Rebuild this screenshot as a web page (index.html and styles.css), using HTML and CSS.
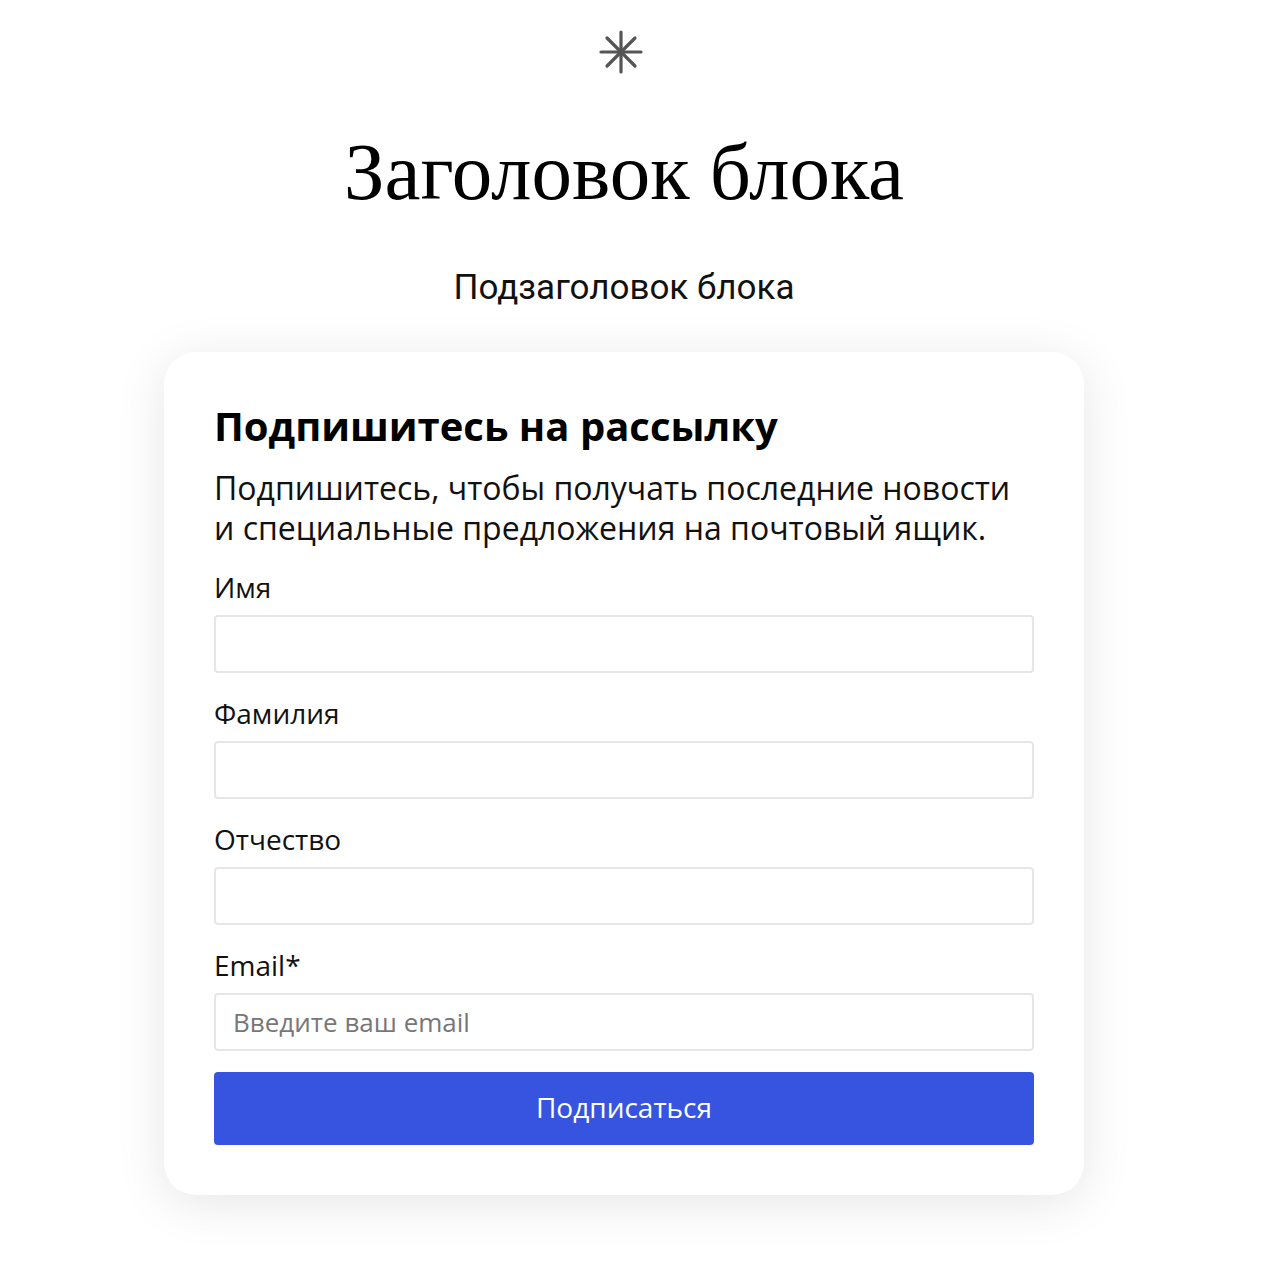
FILE: index.html
```html
<!DOCTYPE html>
<html lang="ru">
<head>
<meta charset="UTF-8" />
<meta name="viewport" content="width=device-width, initial-scale=1" />
<title>Заголовок блока</title>
<link rel="stylesheet" href="styles.css">
</head>
<body>

<section class="block">
  <svg class="block-icon" width="44" height="44" viewBox="0 0 44 44" aria-hidden="true">
    <g stroke="#555" stroke-width="3.2" stroke-linecap="round">
      <line x1="22" y1="2" x2="22" y2="42" />
      <line x1="2" y1="22" x2="42" y2="22" />
      <line x1="8" y1="8" x2="36" y2="36" />
      <line x1="36" y1="8" x2="8" y2="36" />
    </g>
  </svg>

  <h1 class="block-title">Заголовок блока</h1>
  <p class="block-subtitle">Подзаголовок блока</p>

  <form class="subscribe-form" id="subscribeForm" novalidate>
    <h2>Подпишитесь на рассылку</h2>
    <p class="subscribe-text">Подпишитесь, чтобы получать последние новости и специальные предложения на почтовый ящик.</p>

    <label for="name">Имя</label>
    <input type="text" id="name" name="name" />

    <label for="surname">Фамилия</label>
    <input type="text" id="surname" name="surname" />

    <label for="patronymic">Отчество</label>
    <input type="text" id="patronymic" name="patronymic" />

    <label for="email">Email*</label>
    <input type="email" id="email" name="email" placeholder="Введите ваш email" required />

    <button type="submit">Подписаться</button>
  </form>
</section>

</body>
</html>
```

FILE: styles.css
```css
body {
  margin: 0;
  background: #fff;
  font-family: "Open Sans", Arial, sans-serif;
  color: #000;
}
.block {
  display: flex;
  flex-direction: column;
  align-items: center;
  padding: 30px 38px 60px 0;
}
.block-icon {
  display: block;
  margin-right: 6px;
}
.block-title {
  margin: 52px 0 0;
  font-family: "Liberation Serif", "Times New Roman", serif;
  font-weight: normal;
  font-size: 81px;
  line-height: 92px;
}
.block-subtitle {
  margin: 50px 0 0;
  font-family: Roboto, Arial, sans-serif;
  font-size: 35px;
  line-height: 40px;
  color: #111;
}
.subscribe-form {
  box-sizing: border-box;
  width: 920px;
  margin-top: 44px;
  padding: 50px;
  background: #fff;
  border-radius: 32px;
  box-shadow: 0 8px 50px rgba(0, 0, 0, 0.1);
  display: flex;
  flex-direction: column;
}
.subscribe-form h2 {
  margin: 0;
  font-size: 40px;
  line-height: 48px;
  font-weight: bold;
}
.subscribe-text {
  max-width: 810px;
  margin: 18px 0 21px;
  font-size: 32px;
  line-height: 40px;
  color: #111;
}
.subscribe-form label {
  display: block;
  font-size: 28px;
  line-height: 36px;
  margin: 0 0 10px;
  color: #111;
}
.subscribe-form input {
  box-sizing: border-box;
  width: 100%;
  height: 58px;
  padding: 0 17px;
  margin: 0 0 22px;
  border: 2px solid #e6e6e6;
  border-radius: 4px;
  font-family: inherit;
  font-size: 26px;
  color: #222;
}
.subscribe-form input:last-of-type {
  margin-bottom: 21px;
}
.subscribe-form input::placeholder {
  color: #777;
}
.subscribe-form input:focus {
  outline: none;
  border-color: #3654e0;
}
.subscribe-form button {
  height: 73px;
  padding: 0 0 4px;
  background-color: #3654e0;
  border: none;
  border-radius: 4px;
  font-family: inherit;
  font-size: 28px;
  color: #fff;
  cursor: pointer;
}
.subscribe-form button:hover {
  background-color: #2b46c8;
}
```
